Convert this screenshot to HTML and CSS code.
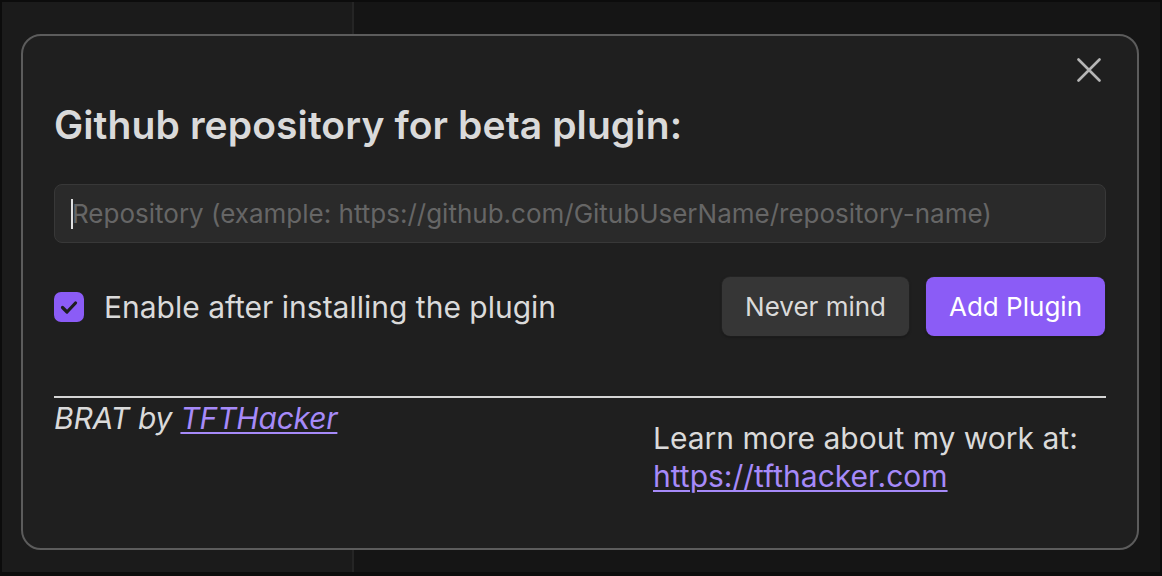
FILE: index.html
```html
<!DOCTYPE html>
<html>
<head>
<meta charset="utf-8">
<link rel="stylesheet" href="styles.css">
</head>
<body>
<div class="app">
  <div class="sidebar"></div>
  <div class="main"></div>
</div>
<div class="modal">
  <button class="close" aria-label="Close">
    <svg width="24" height="24" viewBox="0 0 24 24"><path d="M1.5 1.5 L22.5 22.5 M22.5 1.5 L1.5 22.5" stroke="#b5b5b5" stroke-width="2.6" stroke-linecap="round"/></svg>
  </button>
  <h1 class="title">Github repository for beta plugin:</h1>
  <div class="input-wrap">
    <span class="caret"></span>
    <input class="repo" type="text" placeholder="Repository (example: https://github.com/GitubUserName/repository-name)">
  </div>
  <div class="row">
    <label class="check">
      <span class="box">
        <svg width="30" height="30" viewBox="0 0 30 30"><path d="M8.5 15.5 L13 20 L21.5 11" fill="none" stroke="#1e1e1e" stroke-width="3.2" stroke-linecap="round" stroke-linejoin="round"/></svg>
      </span>
      <span>Enable after installing the plugin</span>
    </label>
    <div class="buttons">
      <button class="btn">Never mind</button>
      <button class="btn cta">Add Plugin</button>
    </div>
  </div>
  <hr class="rule">
  <div class="footer">
    <div class="credit">BRAT by <a href="#">TFTHacker</a></div>
    <div class="more">Learn more about my work at:<br><a href="#">https://tfthacker.com</a></div>
  </div>
</div>
</body>
</html>
```
FILE: styles.css
```css
html, body {
  margin: 0;
  padding: 0;
  width: 1162px;
  height: 576px;
  overflow: hidden;
  background: #0c0c0c;
  font-family: Inter, "Noto Sans", sans-serif;
}
.app {
  display: flex;
  height: 570px;
  margin: 2px 2px 0 2px;
}
.sidebar {
  width: 350px;
  background: #1b1b1b;
  border-right: 2px solid #252525;
}
.main {
  flex: 1;
  background: #151515;
}
.modal {
  position: absolute;
  left: 21px;
  top: 34px;
  width: 1052px;
  height: 452px;
  padding: 30px 31px 30px 31px;
  background: #1f1f1f;
  border: 2px solid #5c5c5c;
  border-radius: 20px;
  color: #dadada;
}
.close {
  position: absolute;
  right: 36px;
  top: 22px;
  width: 24px;
  height: 24px;
  padding: 0;
  border: 0;
  background: none;
}
.title {
  margin: 35px 0 0 0;
  font-size: 39px;
  font-weight: 600;
  line-height: 48px;
  letter-spacing: 0.1px;
  color: #dadada;
}
.input-wrap {
  position: relative;
  margin-top: 35px;
}
.repo {
  box-sizing: border-box;
  display: block;
  width: 100%;
  height: 59px;
  padding: 0 17px;
  background: #2a2a2a;
  border: 1px solid #383838;
  border-radius: 8px;
  font-family: Inter, sans-serif;
  font-size: 26px;
  color: #dadada;
  outline: none;
}
.repo::placeholder { color: #666666; }
.caret {
  position: absolute;
  left: 17px;
  top: 15px;
  width: 2px;
  height: 30px;
  background: #e0e0e0;
}
.row {
  display: flex;
  align-items: center;
  justify-content: space-between;
  margin-top: 34px;
}
.check {
  display: flex;
  align-items: center;
  gap: 20px;
  font-size: 30px;
}
.box {
  width: 30px;
  height: 30px;
  border-radius: 7px;
  background: #8b5cf6;
  display: flex;
  align-items: center;
  justify-content: center;
}
.buttons {
  display: flex;
  gap: 17px;
  margin-right: 1px;
}
.btn {
  height: 59px;
  padding: 0 23px;
  border: 0;
  border-radius: 8px;
  background: #363636;
  color: #dadada;
  font-family: Inter, sans-serif;
  font-size: 26px;
  box-shadow: 0 1px 3px rgba(0,0,0,0.4), 0 0 0 1px rgba(255,255,255,0.03);
}
.btn.cta {
  background: #8b5cf6;
  color: #ffffff;
}
.rule {
  margin: 60px 0 0 0;
  border: 0;
  height: 2px;
  background: #d4d4d4;
}
.footer {
  display: flex;
  justify-content: space-between;
  font-size: 30px;
  line-height: 38px;
}
.credit {
  font-style: italic;
  margin-top: 1px;
  letter-spacing: -0.2px;
}
.more {
  width: 453px;
  margin-top: 21px;
}
a {
  color: #a68af9;
  text-decoration-thickness: 2px;
  text-underline-offset: 3px;
}
```
